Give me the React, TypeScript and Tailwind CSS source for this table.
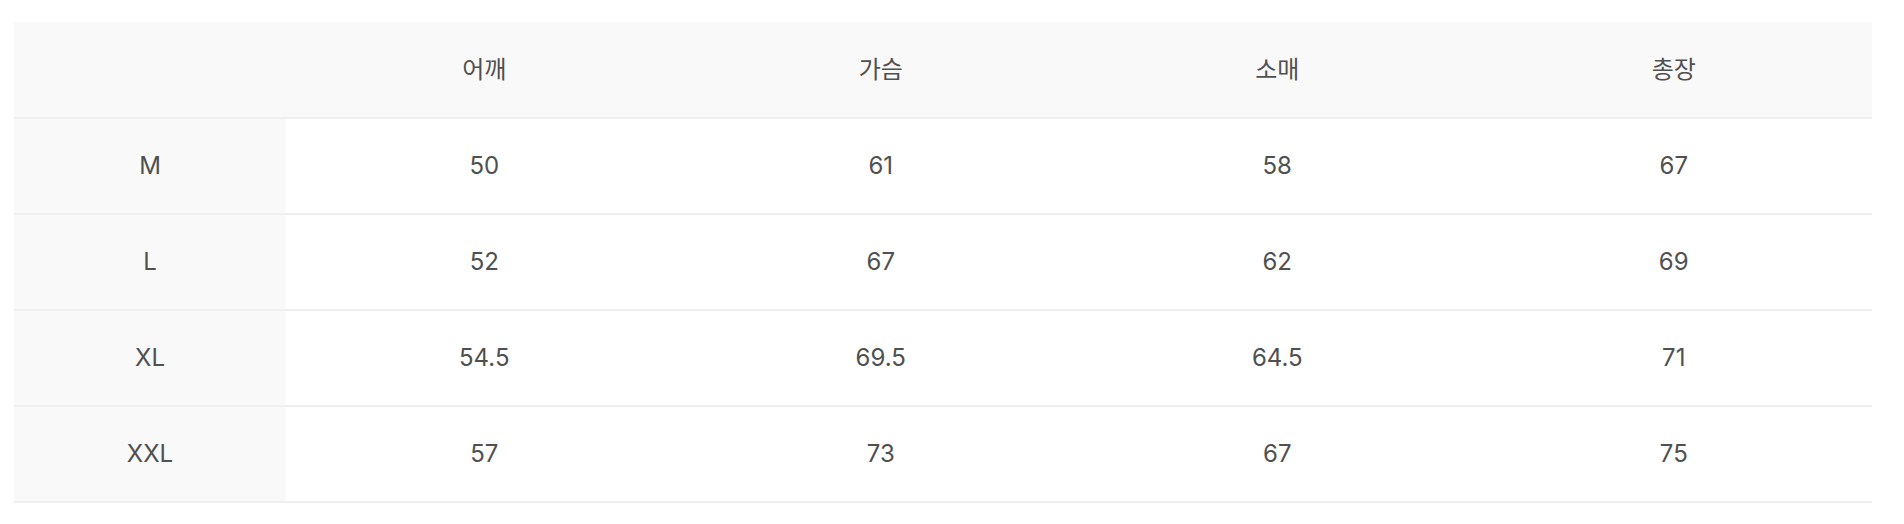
import React from "react";

// Size chart data
const headers = ["어깨", "가슴", "소매", "총장"];

const rows: { size: string; values: string[] }[] = [
    { size: "M", values: ["50", "61", "58", "67"] },
    { size: "L", values: ["52", "67", "62", "69"] },
    { size: "XL", values: ["54.5", "69.5", "64.5", "71"] },
    { size: "XXL", values: ["57", "73", "67", "75"] },
];

export default function App() {
    return (
        <div
            className="bg-white w-[1904px] h-[524px] pl-[14px] pr-[32px] pt-[22px] text-[24px] text-[#505050]"
            style={{ fontFamily: 'Inter, "Noto Sans CJK KR", sans-serif' }}
        >
            <table className="w-full border-collapse table-fixed">
                <colgroup>
                    <col className="w-[272px]" />
                    <col />
                    <col />
                    <col />
                    <col />
                </colgroup>
                <thead>
                    <tr className="bg-[#f9f9f9] border-b-2 border-[#eeeeee] h-[96px]">
                        <th className="font-normal"></th>
                        {headers.map((h) => (
                            <th key={h} className="font-normal text-center align-middle">
                                {h}
                            </th>
                        ))}
                    </tr>
                </thead>
                <tbody>
                    {rows.map((r) => (
                        <tr key={r.size} className="border-b-2 border-[#eeeeee] h-[96px]">
                            <td className="bg-[#f9f9f9] text-center align-middle">{r.size}</td>
                            {r.values.map((v, i) => (
                                <td key={i} className="text-center align-middle">
                                    {v}
                                </td>
                            ))}
                        </tr>
                    ))}
                </tbody>
            </table>
        </div>
    );
}
